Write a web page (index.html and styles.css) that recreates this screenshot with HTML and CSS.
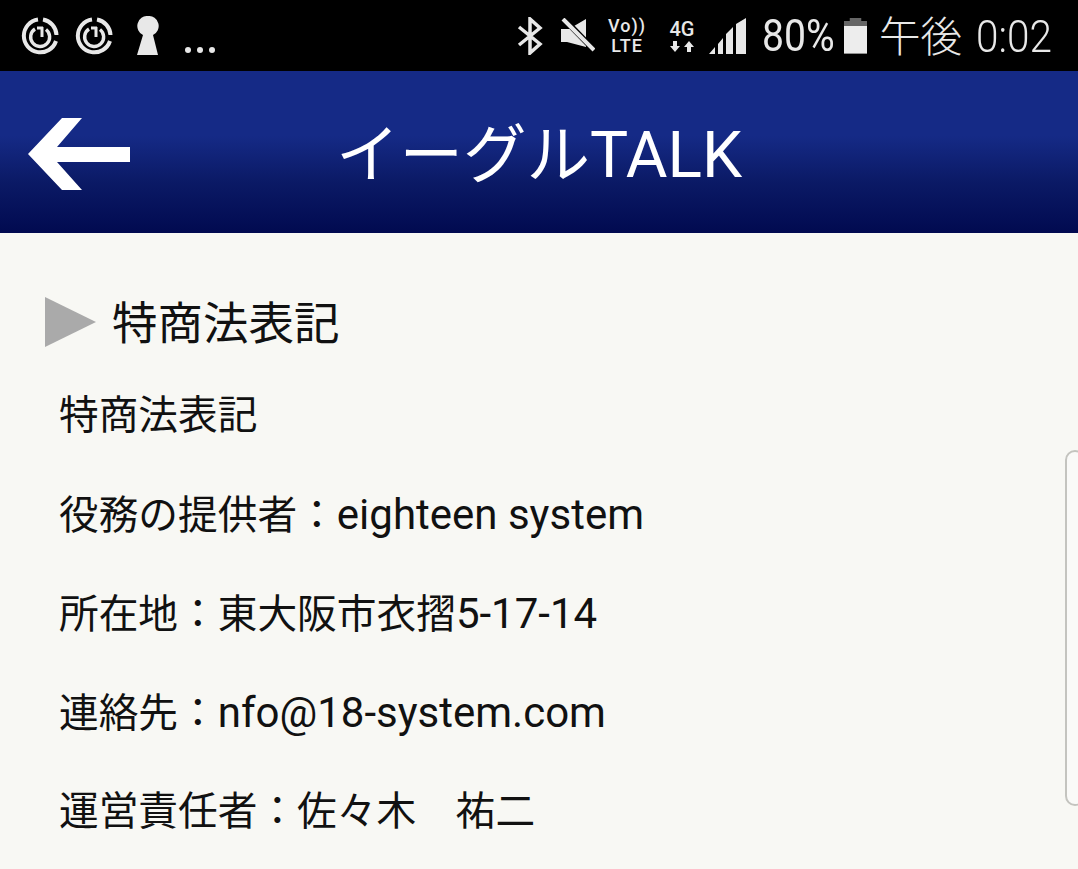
FILE: index.html
```html
<!DOCTYPE html>
<html lang="ja">
<head>
    <meta charset="UTF-8">
    <meta name="viewport" content="width=device-width, initial-scale=1.0">
    <title>イーグルTALK</title>
    <link rel="stylesheet" href="styles.css">
</head>
<body>
    <!-- ステータスバー -->
    <div class="status-bar">
        <div class="status-left">
            <svg class="ico-sync" viewBox="0 0 38 38"><g fill="none" stroke="#e8e8e8"><path stroke-width="4" d="M17 2.500A16.500 16.500 0 1 0 35 24"/><path stroke-width="4" d="M22 2.500A16.500 16.500 0 0 1 35.500 18"/><path stroke-width="3.400" d="M14 12A9.500 9.500 0 1 0 25 12.500"/><path stroke-width="3" d="M21 10V20M16 11H22"/></g></svg>
            <svg class="ico-sync" viewBox="0 0 38 38"><g fill="none" stroke="#e8e8e8"><path stroke-width="4" d="M17 2.500A16.500 16.500 0 1 0 35 24"/><path stroke-width="4" d="M22 2.500A16.500 16.500 0 0 1 35.500 18"/><path stroke-width="3.400" d="M14 12A9.500 9.500 0 1 0 25 12.500"/><path stroke-width="3" d="M21 10V20M16 11H22"/></g></svg>
            <svg class="ico-key" viewBox="0 0 22 40"><path fill="#e8e8e8" d="M11 0A10 10 0 0 1 16 19L21 39H0L6 19A10 10 0 0 1 11 0Z"/></svg>
            <div class="more-dots"><span></span><span></span><span></span></div>
        </div>
        <div class="status-right">
            <svg class="ico-bt" viewBox="0 0 26 38"><path fill="none" stroke="#e8e8e8" stroke-width="3.500" d="M2 10L23 27L13 36V2L23 11L2 28"/></svg>
            <svg class="ico-mute" viewBox="0 0 34 36"><path fill="#e8e8e8" d="M0 11H8L25 1V29L6 24H0Z"/><path stroke="#000" stroke-width="6" d="M0 -2L34 33"/><path stroke="#e8e8e8" stroke-width="4" d="M2 1L33 32"/></svg>
            <div class="net-volte"><span>Vo))</span><span>LTE</span></div>
            <div class="net-4g"><span>4G</span><svg viewBox="0 0 24 11"><path fill="#e8e8e8" d="M3 0H7V5H10L5 11L0 5H3ZM17 11H21V6H24L19 0L14 6H17Z"/></svg></div>
            <svg class="ico-signal" viewBox="0 0 37 36"><path fill="#e8e8e8" d="M0 36L6 29V36ZM9 26L14 20V36H9ZM17 16L24 9V36H17ZM27 6L37 0V36H27Z"/></svg>
            <span class="battery-pct">80%</span>
            <div class="battery"><div class="battery-fill"></div></div>
            <div class="clock"><span class="clock-ampm">午後</span><span class="clock-time">0:02</span></div>
        </div>
    </div>

    <!-- ヘッダー -->
    <header class="app-header">
        <svg class="back-arrow" viewBox="0 0 104 73"><path fill="#fff" d="M1 36L35 0H55L30 29H103V44H30L55 72H35Z"/></svg>
        <h1>イーグル<span class="lat">TALK</span></h1>
    </header>

    <main class="content">
        <div class="section-title">
            <span class="title-mark"></span>
            <h2>特商法表記</h2>
        </div>
        <p>特商法表記</p>
        <p>役務の提供者：<span class="lat">eighteen system</span></p>
        <p>所在地：東大阪市衣摺<span class="lat">5-17-14</span></p>
        <p>連絡先：<span class="lat">nfo@18-system.com</span></p>
        <p>運営責任者：佐々木　祐二</p>
    </main>

    <div class="edge-handle"></div>
</body>
</html>
```

FILE: styles.css
```css
html, body {
    margin: 0;
    height: 869px;
    overflow: hidden;
}

body {
    position: relative;
    background: #f8f8f4;
    color: #111;
    font-family: Roboto, "Noto Sans CJK JP", sans-serif;
}

.status-bar {
    height: 71px;
    background: #000;
    color: #e8e8e8;
    display: flex;
    justify-content: space-between;
    align-items: center;
    padding: 0 26px 0 21px;
}

.status-left, .status-right {
    display: flex;
    align-items: center;
}

.ico-sync {
    width: 38px;
    height: 38px;
    margin-right: 16px;
}

.ico-key {
    width: 22px;
    height: 40px;
    margin-left: 8px;
}

.more-dots {
    display: flex;
    gap: 6px;
    margin: 28px 0 0 26px;
}

.more-dots span {
    width: 6px;
    height: 6px;
    border-radius: 50%;
    background: #e8e8e8;
}

.ico-bt {
    width: 26px;
    height: 38px;
    margin-right: 18px;
}

.ico-mute {
    width: 34px;
    height: 36px;
    margin-right: 14px;
}

.net-volte, .net-4g {
    display: flex;
    flex-direction: column;
    align-items: center;
    font-weight: 500;
}

.net-volte {
    width: 36px;
    margin-right: 23px;
    font-size: 18px;
    line-height: 18px;
    letter-spacing: 1px;
    gap: 2px;
}

.net-4g {
    width: 28px;
    margin-right: 13px;
    font-size: 20px;
    line-height: 19px;
}

.net-4g svg {
    width: 24px;
    height: 11px;
    margin-top: 2px;
}

.ico-signal {
    width: 37px;
    height: 36px;
    margin-right: 16px;
}

.battery-pct {
    font-size: 44px;
    line-height: 71px;
    width: 72px;
    padding-top: 2px;
    white-space: nowrap;
    transform: scaleX(0.89);
    transform-origin: left center;
}

.battery {
    width: 23px;
    height: 36px;
    margin: 0 12px 0 10px;
    background: #666;
    clip-path: polygon(25% 0, 75% 0, 75% 10%, 100% 10%, 100% 100%, 0 100%, 0 10%, 25% 10%);
    position: relative;
}

.battery-fill {
    position: absolute;
    left: 0;
    right: 0;
    bottom: 0;
    height: 28px;
    background: #ededed;
}

.clock {
    display: flex;
    align-items: center;
    font-weight: 300;
    line-height: 71px;
    padding-top: 3px;
    white-space: nowrap;
}

.clock-ampm {
    font-size: 41.500px;
    width: 83px;
    margin-right: 14px;
}

.clock-time {
    font-size: 44px;
    width: 76px;
    transform: scaleX(0.92);
    transform-origin: left center;
}

.app-header {
    height: 162px;
    background: linear-gradient(#152a86 0, #152a86 40%, #0b1a66 68%, #010a50 100%);
    display: flex;
    align-items: center;
    padding-left: 27px;
    box-sizing: border-box;
}

.back-arrow {
    width: 104px;
    height: 73px;
    margin-top: 5px;
    flex-shrink: 0;
    filter: blur(0.6px);
}

h1 {
    margin: 8px 0 0 205px;
    color: #fff;
    font-size: 63.500px;
    font-weight: 400;
    line-height: 154px;
    white-space: nowrap;
}

h1 .lat {
    font-size: 64px;
}

.content {
    padding: 62px 0 0 59px;
}

.section-title {
    display: flex;
    align-items: center;
    height: 60px;
    margin-left: -14px;
}

.title-mark {
    width: 0;
    height: 0;
    border-left: 51px solid #aaa;
    border-top: 25px solid transparent;
    border-bottom: 25px solid transparent;
    margin: 0 16px 6px 0;
}

h2 {
    margin: 0;
    font-size: 45.500px;
    font-weight: 400;
    line-height: 60px;
}

.content p {
    margin: 0;
    font-size: 39.700px;
    line-height: 99px;
    height: 99px;
    white-space: nowrap;
}

.content p .lat {
    font-size: 42px;
}

.section-title + p {
    margin-top: 11px;
}

/* 端末のエッジパネルのつまみ */
.edge-handle {
    position: absolute;
    left: 1065px;
    top: 450px;
    width: 20px;
    height: 356px;
    box-sizing: border-box;
    background: #fafaf8;
    border: 2px solid #c4c4bf;
    border-radius: 14px;
}
```
